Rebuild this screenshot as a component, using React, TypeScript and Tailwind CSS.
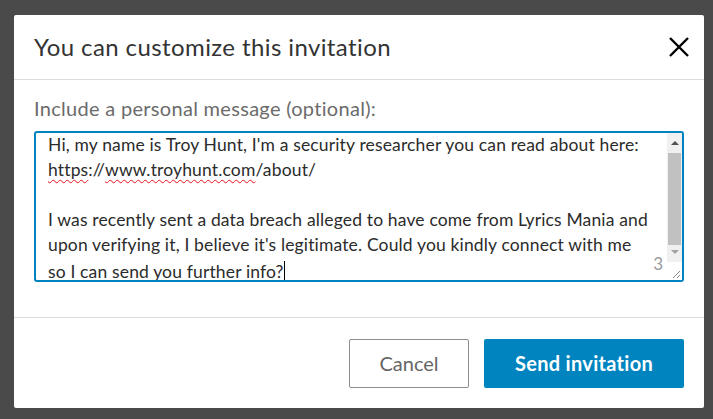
const FONT = "font-['Lato','Liberation_Sans',sans-serif]";

const lines: Array<React.ReactNode> = [
  "Hi, my name is Troy Hunt, I'm a security researcher you can read about here:",
  <>
    <span className="underline decoration-wavy decoration-[#e8141d] decoration-1 underline-offset-[3px]">https</span>
    ://
    <span className="underline decoration-wavy decoration-[#e8141d] decoration-1 underline-offset-[3px]">www.troyhunt.com</span>
    /about/
  </>,
  "\u00a0",
  "I was recently sent a data breach alleged to have come from Lyrics Mania and",
  "upon verifying it, I believe it's legitimate. Could you kindly connect with me",
  <>
    so I can send you further info?
    <span className="inline-block h-[21px] w-px translate-y-[4px] bg-black" />
  </>,
];

function Scrollbar() {
  return (
    <div className="flex w-[15px] shrink-0 flex-col bg-[#f0f0f0]">
      <div className="flex h-[20px] items-center justify-center">
        <span className="h-0 w-0 border-x-[4px] border-b-[4px] border-x-transparent border-b-[#505050]" />
      </div>
      <div className="mx-[1px] h-[92px] bg-[#c1c1c1]" />
      <div className="flex h-[14px] items-center justify-center">
        <span className="h-0 w-0 border-x-[4px] border-t-[4px] border-x-transparent border-t-[#a3a3a3]" />
      </div>
      <div className="flex-1" />
      <div className="relative h-[18px] bg-white">
        <svg width="15" height="18" viewBox="0 0 15 18" className="absolute inset-0">
          <path d="M13 9 L6 16 M13 13 L10 16" stroke="#8a8a8a" strokeWidth="1" />
        </svg>
      </div>
    </div>
  );
}

export default function App() {
  return (
    <div className={`h-screen w-full overflow-hidden bg-[#4a4a4a] pl-[14px] pt-[15px] ${FONT}`}>
      <div className="flex h-[393px] w-[690px] flex-col rounded-[2px] bg-white">
        <header className="flex h-[65px] shrink-0 items-center justify-between border-b border-[#dcdcdc] pl-5 pr-[15px]">
          <h2 className="text-[24px] tracking-[0.4px] text-[#333]">You can customize this invitation</h2>
          <svg width="20" height="20" viewBox="0 0 20 20" className="mt-[-1px]">
            <path d="M1 1 L19 19 M19 1 L1 19" stroke="#000" strokeWidth="2.4" />
          </svg>
        </header>

        <section className="flex-1 border-b border-[#dcdcdc] px-5 pt-[15px]">
          <p className="pb-[10px] text-[20px] leading-[26px] tracking-[0.3px] text-[#6b6b6b]">
            Include a personal message (optional):
          </p>
          <div className="relative flex h-[151px] overflow-hidden rounded-[3px] border-2 border-[#0084bf]">
            <div className="-mt-px flex-1 pl-3 text-[17.5px] leading-[25px] tracking-[0.15px] text-[#2b2b2b]">
              {lines.map((l, i) => (
                <div key={i} className={i === lines.length - 1 ? "h-[22px] whitespace-nowrap" : "whitespace-nowrap"}>
                  {l}
                </div>
              ))}
            </div>
            <span className="absolute bottom-[8px] right-[19px] text-[17px] leading-none text-[#999]">3</span>
            <Scrollbar />
          </div>
        </section>

        <footer className="flex h-[90px] shrink-0 items-center justify-end gap-[15px] pr-5">
          <button className="h-[49px] w-[120px] rounded-[2px] border border-[#8c8c8c] text-[20px] text-[#666]">
            Cancel
          </button>
          <button className="h-[49px] w-[200px] rounded-[2px] bg-[#0084bf] text-[20px] font-bold tracking-[0.3px] text-white">
            Send invitation
          </button>
        </footer>
      </div>
    </div>
  );
}
